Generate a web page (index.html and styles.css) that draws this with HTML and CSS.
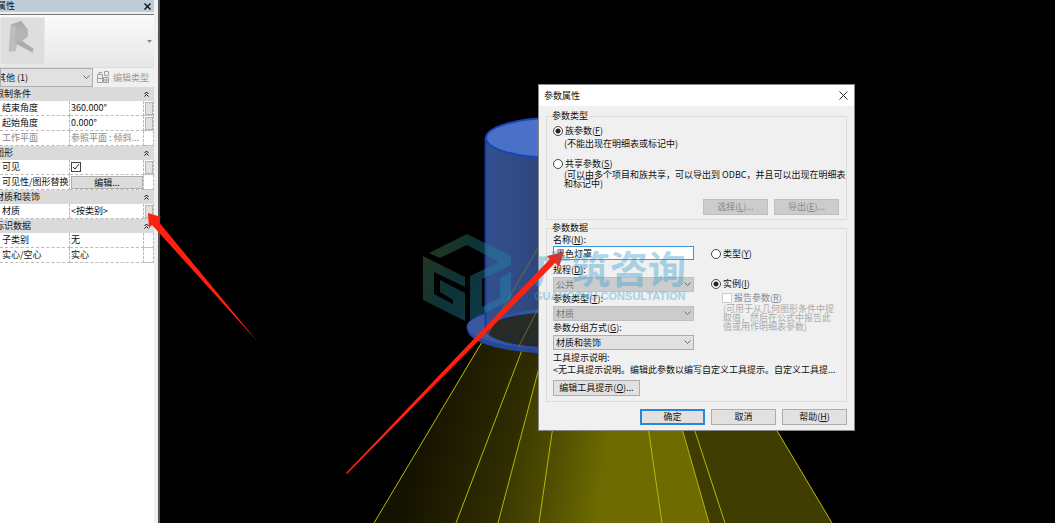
FILE: index.html
```html
<!DOCTYPE html>
<html lang="zh-CN">
<head>
  <meta charset="UTF-8" />
  <meta name="viewport" content="width=device-width, initial-scale=1.0" />
  <title>参数属性</title>
  <link rel="stylesheet" href="styles.css">
</head>
<body>
  <aside class="palette">
    <header class="palette-title">
      <h2>属性</h2>
      <button class="palette-close" aria-label="关闭">
        <svg width="7" height="7" viewBox="0 0 7 7"><path d="M.5 .5l6 6M6.5 .5l-6 6" stroke="#111" stroke-width="1.4"/></svg>
      </button>
    </header>

    <div class="preview">
      <svg class="thumb" width="45" height="48" viewBox="0 0 45 48">
        <path d="M10 7l11-4 7 9v7l-6 5 12 8-1 4-16-8-2 7H8z" fill="#bdbdbd"/>
        <path d="M10 7l11-4 7 9-12-3z" fill="#adadad"/>
        <path d="M16 9l12 3v7l-6 5-8 1z" fill="#b4b4b4"/>
        <path d="M14 25l8-1 12 8-1 4z" fill="#acacac"/>
      </svg>
      <svg class="drop" width="5" height="3" viewBox="0 0 5 3"><path d="M0 0h5L2.500 3z" fill="#888"/></svg>
    </div>

    <div class="type-row">
      <select class="type-select" aria-label="类别"><option>其他 (1)</option></select>
      <button class="edit-type" disabled>
        <svg width="13" height="13" viewBox="0 0 13 13" fill="none" stroke="#a0a0a0">
          <path d="M.5 3.500h5v8h-5zM.5 7.500h5M2 3.500v-2h3M7.500 .5h4v4h-4zM6.500 6.500h5v5h-5zM6.500 9h5M9 6.500v5"/>
        </svg>
        编辑类型
      </button>
    </div>

    <table class="props">
      <tbody>
        <tr class="group"><th colspan="2">限制条件</th><th><svg class="chev" viewBox="0 0 5 6"><path d="M.5 3l2-2 2 2M.5 5.500l2-2 2 2"/></svg></th></tr>
        <tr><td>结束角度</td><td>360.000°</td><td><button class="link" aria-label="关联结束角度"></button></td></tr>
        <tr><td>起始角度</td><td>0.000°</td><td><button class="link" aria-label="关联起始角度"></button></td></tr>
        <tr class="off"><td>工作平面</td><td>参照平面 : 倾斜...</td><td></td></tr>
        <tr class="group"><th colspan="2">图形</th><th><svg class="chev" viewBox="0 0 5 6"><path d="M.5 3l2-2 2 2M.5 5.500l2-2 2 2"/></svg></th></tr>
        <tr><td><label for="visible">可见</label></td><td><input type="checkbox" id="visible" class="tick" checked></td><td><button class="link" aria-label="关联可见"></button></td></tr>
        <tr><td>可见性/图形替换</td><td class="fill"><button class="edit">编辑...</button></td><td></td></tr>
        <tr class="group"><th colspan="2">材质和装饰</th><th><svg class="chev" viewBox="0 0 5 6"><path d="M.5 3l2-2 2 2M.5 5.500l2-2 2 2"/></svg></th></tr>
        <tr><td>材质</td><td>&lt;按类别&gt;</td><td><button class="link" aria-label="关联材质"></button></td></tr>
        <tr class="group"><th colspan="2">标识数据</th><th><svg class="chev" viewBox="0 0 5 6"><path d="M.5 3l2-2 2 2M.5 5.500l2-2 2 2"/></svg></th></tr>
        <tr><td>子类别</td><td>无</td><td></td></tr>
        <tr><td>实心/空心</td><td>实心</td><td></td></tr>
      </tbody>
    </table>
  </aside>

  <main class="stage">
    <svg class="scene" viewBox="160 0 895 523" preserveAspectRatio="xMinYMin slice">
      <defs>
        <linearGradient id="c1" gradientUnits="userSpaceOnUse" x1="420" x2="500" y1="420" y2="440"><stop offset="0" stop-color="#141200"/><stop offset="1" stop-color="#2a2700"/></linearGradient>
        <linearGradient id="c2" gradientUnits="userSpaceOnUse" x1="485" x2="525" y1="430" y2="440"><stop offset="0" stop-color="#272500"/><stop offset="1" stop-color="#333000"/></linearGradient>
        <linearGradient id="c3" gradientUnits="userSpaceOnUse" x1="505" x2="605" y1="460" y2="475"><stop offset="0" stop-color="#3a3700"/><stop offset=".4" stop-color="#4c4a00"/><stop offset="1" stop-color="#6e6c00"/></linearGradient>
        <linearGradient id="tube" x1="0" x2="1"><stop offset="0" stop-color="#33508f"/><stop offset="1" stop-color="#2e467c"/></linearGradient>
      </defs>
      <!-- lamp shade -->
      <path d="M482 340L374 523H456L522 348z" fill="url(#c1)"/>
      <path d="M522 348L456 523H498L548 330z" fill="url(#c2)"/>
      <path d="M548 330L498 523H709L660 350z" fill="url(#c3)"/>
      <path d="M660 350L709 523H832L730 350z" fill="#3e3c00"/>
      <path d="M482 342L374 523M522 350L456 523M549 330L498 523M564 350L539 523M634 330L662 523M654 330L709 523M662 330L725 523M717 330L832 523" stroke="#b9b900" fill="none"/>
      <!-- tube and flange -->
      <ellipse cx="555" cy="330" rx="87" ry="23" fill="#2c4888" stroke="#1a48c0"/>
      <ellipse cx="555" cy="327" rx="88" ry="22" fill="#3a58a0" stroke="#1a48c0"/>
      <ellipse cx="555" cy="330" rx="69" ry="18" fill="#262b27" stroke="#2450b8"/>
      <path d="M485 138V330Q492 315 540 309V138z" fill="url(#tube)"/>
      <path d="M485.500 138V329" stroke="#183b9c" stroke-width="2"/>
      <ellipse cx="555" cy="138" rx="69" ry="20" fill="#4a70c8" stroke="#1a45b4" stroke-width="2"/>
      <path d="M538 248L486 337M538 309L518 348" stroke="#666c45" fill="none"/>
    </svg>

    <section class="dialog" role="dialog" aria-labelledby="dlg-title">
      <header class="dialog-title">
        <h1 id="dlg-title">参数属性</h1>
        <button class="dialog-close" aria-label="关闭">
          <svg width="9" height="9" viewBox="0 0 9 9"><path d="M.5 .5l8 8M8.500 .5l-8 8" stroke="#222"/></svg>
        </button>
      </header>

      <form class="dialog-body">
        <fieldset class="kind">
          <legend>参数类型</legend>
          <label class="choice"><input type="radio" name="kind" checked><span>族参数(<u>F</u>)</span></label>
          <p class="hint">(不能出现在明细表或标记中)</p>
          <label class="choice shared"><input type="radio" name="kind"><span>共享参数(<u>S</u>)</span></label>
          <p class="hint">(可以由多个项目和族共享，可以导出到 ODBC，并且可以出现在明细表<br>和标记中)</p>
          <div class="kind-actions">
            <button type="button" disabled>选择(<u>L</u>)...</button>
            <button type="button" disabled>导出(<u>E</u>)...</button>
          </div>
        </fieldset>

        <fieldset class="data">
          <legend>参数数据</legend>
          <div class="columns">
            <div class="fields">
              <label for="name">名称(<u>N</u>):</label>
              <input type="text" id="name" value="黑色灯罩">
              <label for="discipline" class="gap">规程(<u>D</u>):</label>
              <select id="discipline" disabled><option>公共</option></select>
              <label for="ptype">参数类型(<u>T</u>):</label>
              <select id="ptype" disabled><option>材质</option></select>
              <label for="pgroup">参数分组方式(<u>G</u>):</label>
              <select id="pgroup"><option>材质和装饰</option></select>
            </div>
            <div class="scope">
              <label class="choice"><input type="radio" name="scope"><span>类型(<u>Y</u>)</span></label>
              <label class="choice instance"><input type="radio" name="scope" checked><span>实例(<u>I</u>)</span></label>
              <label class="choice report"><input type="checkbox" disabled><span>报告参数(<u>R</u>)</span></label>
              <p class="note">(可用于从几何图形条件中提<br>取值，然后在公式中报告此<br>值或用作明细表参数)</p>
            </div>
          </div>
          <p class="tip-label">工具提示说明:</p>
          <p class="tip">&lt;无工具提示说明。编辑此参数以编写自定义工具提示。自定义工具提...</p>
          <button type="button" class="edit-tip">编辑工具提示(<u>O</u>)...</button>
        </fieldset>

        <div class="footer">
          <button type="button" class="primary">确定</button>
          <button type="button">取消</button>
          <button type="button">帮助(<u>H</u>)</button>
        </div>
      </form>
    </section>

    <div class="watermark">
      <svg width="90" height="88" viewBox="422 233 90 88">
        <defs>
          <linearGradient id="wm" x1="0" x2="1" y1="0" y2=".6"><stop offset="0" stop-color="#6c8a3c"/><stop offset=".5" stop-color="#1f8088"/><stop offset="1" stop-color="#2290c0"/></linearGradient>
        </defs>
        <path fill="url(#wm)" d="M429 253L467 234L511 256V265L482 279V307L500 298V278L511 272V300L470 320V276L499 262L467 245L440 258ZM423 256L465 277V287L434 272V294L453 304V300L440 292V280L465 293V321L423 300Z"/>
      </svg>
      <div class="brand">
        <strong>广筑咨询</strong>
        <span>GUANGZHU CONSULTATION</span>
      </div>
    </div>
  </main>

  <svg class="arrows" width="1055" height="523" viewBox="0 0 1055 523">
    <defs>
      <linearGradient id="head" gradientUnits="userSpaceOnUse" x1="550" x2="563" y1="265" y2="252"><stop offset="0" stop-color="#ff2010"/><stop offset="1" stop-color="#b8444c"/></linearGradient>
    </defs>
    <path d="M148 213L161 217L158 221L257 341L152 225L149 228Z" fill="#ff2010"/>
    <path d="M564 252L559 267L555 263L347 474L346 473L550 259L547 256Z" fill="url(#head)"/>
  </svg>
</body>
</html>
```

FILE: styles.css
```css
* {
  margin: 0;
  padding: 0;
  box-sizing: border-box;
}
body {
  display: flex;
  min-height: 100vh;
  position: relative;
  overflow: hidden;
  background: #000;
  color: #111;
  font-family: 'Noto Sans CJK SC', sans-serif;
  font-size: 9px;
  line-height: 12px;
}
button, input, select {
  font: inherit;
  color: inherit;
}
h1, h2, th {
  font-size: 9px;
  font-weight: normal;
}

/* Properties palette */
.palette {
  flex: 0 0 160px;
  background: #fff;
  border-right: 2px solid #555;
  box-shadow: inset -4px 0 #f0f0f0;
  padding-right: 4px;
  overflow: hidden;
}
.palette-title {
  display: flex;
  justify-content: space-between;
  align-items: center;
  height: 14px;
  padding-right: 3px;
  background: #bfcddb;
  border-bottom: 2px solid #f0f0f0;
}
.palette-title h2 {
  margin-left: -3px;
}
.palette-close {
  display: flex;
  border: 0;
  background: none;
}
.preview {
  display: flex;
  justify-content: space-between;
  align-items: center;
  height: 54px;
  padding-right: 2px;
  border-top: 1px solid #777;
  border-bottom: 1px solid #ddd;
  background: linear-gradient(#fbfbfb, #e6e6e6);
}
.thumb {
  background: #dedede;
  border: 1px solid #e8e8e8;
}
.type-row {
  display: flex;
  align-items: center;
  gap: 4px;
  height: 19px;
  background: #f0f0f0;
}
select {
  appearance: none;
  border: 1px solid #adadad;
  border-radius: 0;
  background: #e1e1e1 url("data:image/svg+xml,%3Csvg xmlns='http://www.w3.org/2000/svg' width='7' height='5'%3E%3Cpath d='M.5 .5l3 3 3-3' fill='none' stroke='%23666'/%3E%3C/svg%3E") no-repeat right 2px center;
}
.type-select {
  width: 93px;
  height: 19px;
  text-indent: -4px;
}
.edit-type {
  display: flex;
  align-items: center;
  gap: 3px;
  border: 0;
  background: none;
  color: #999;
  white-space: nowrap;
}
.props {
  width: 154px;
  border-collapse: separate;
  border-spacing: 0;
}
.props tr {
  height: 15px;
}
.props .group {
  height: 14px;
  background: #dadada;
}
.props th {
  text-align: left;
  text-indent: -5px;
}
.props th:last-child {
  width: 10px;
  text-indent: 0;
}
.props td {
  padding-left: 1px;
  border-right: 1px dashed #bbb;
  border-bottom: 1px dashed #bbb;
  white-space: nowrap;
}
.props td:first-child {
  width: 70px;
  padding-left: 2px;
}
.props td:last-child {
  padding: 0;
}
.props .fill {
  padding: 0 0 0 1px;
}
.off {
  color: #888;
}
.chev {
  display: block;
  width: 5px;
  height: 6px;
  fill: none;
  stroke: #111;
}
.link {
  display: block;
  width: 8px;
  height: 13px;
  margin-left: 1px;
  border: 1px solid #b5b5b5;
  background: #e1e1e1;
}
.edit {
  display: block;
  width: 100%;
  height: 13px;
  line-height: 11px;
  border: 1px solid #adadad;
  background: #dcdcdc;
}

/* Ticks and radios */
input[type="checkbox"], input[type="radio"] {
  appearance: none;
  flex: none;
  width: 10px;
  height: 10px;
  border: 1px solid #444;
  background: #fff;
}
input[type="radio"] {
  border-radius: 50%;
}
input[type="radio"]:checked {
  background: radial-gradient(#222 0 2px, #fff 3px);
}
input[type="checkbox"]:disabled {
  border-color: #ccc;
}
.tick {
  display: block;
}
.tick:checked {
  background: #fff url("data:image/svg+xml,%3Csvg xmlns='http://www.w3.org/2000/svg' width='8' height='8'%3E%3Cpath d='M1 4l2 2 4-5' fill='none' stroke='%23222'/%3E%3C/svg%3E") no-repeat center;
}

/* Drawing area */
.stage {
  flex: 1;
  position: relative;
  background: #000;
}
.scene {
  position: absolute;
  width: 100%;
  height: 100%;
}

/* Parameter dialog */
.dialog {
  position: absolute;
  left: 378px;
  top: 84px;
  width: 317px;
  background: #f0f0f0;
  border: 1px solid #888;
  white-space: nowrap;
}
.dialog-title {
  display: flex;
  justify-content: space-between;
  align-items: center;
  height: 21px;
  padding: 0 6px 0 5px;
  background: #fff;
}
.dialog-close {
  display: flex;
  border: 0;
  background: none;
}
.dialog-body {
  padding: 4px 7px 5px;
}
fieldset {
  min-width: 0;
  border: 1px solid #dcdcdc;
  padding: 0 6px;
}
legend {
  margin-left: -1px;
  line-height: 12px;
}
.kind {
  height: 110px;
}
.choice {
  display: flex;
  align-items: center;
  gap: 2px;
  height: 13px;
}
.kind .choice {
  margin-top: 2px;
}
.kind .shared {
  margin-top: 7px;
}
.hint {
  padding-left: 11px;
  line-height: 9px;
}
.kind .hint:nth-of-type(1) {
  line-height: 13px;
}
.dialog button:not(.dialog-close) {
  width: 65px;
  height: 16px;
  line-height: 12px;
  border: 1px solid #adadad;
  background: #e1e1e1;
}
.dialog button:not(.dialog-close):disabled {
  background: #ccc;
  border-color: #bfbfbf;
  color: #888;
}
.kind-actions {
  display: flex;
  justify-content: flex-end;
  gap: 6px;
  margin-top: 11px;
  padding-right: 1px;
}
.data {
  margin-top: 2px;
}
.columns {
  display: flex;
  gap: 17px;
}
.fields {
  display: flex;
  flex-direction: column;
  width: 141px;
}
.fields label {
  height: 14px;
  line-height: 14px;
}
.fields label:first-child {
  height: 12px;
  line-height: 12px;
}
.fields .gap {
  margin-top: 3px;
}
.fields input {
  height: 14px;
  padding-left: 2px;
  border: 1px solid #3c96dc;
  background: #fff;
  outline: none;
}
.fields select {
  height: 15px;
  padding-left: 2px;
}
select:disabled {
  background-color: #ccc;
  border-color: #bfbfbf;
  color: #777;
  opacity: 1;
}
.scope {
  flex: 1;
  padding-top: 13px;
}
.instance {
  margin-top: 17px;
}
.report {
  padding-left: 11px;
  margin-top: 1px;
  color: #888;
}
.note {
  padding-left: 12px;
  line-height: 9px;
  color: #aaa;
}
.tip-label {
  margin-top: 2px;
}
.edit-tip {
  margin: 4px 0 5px;
}
.dialog .edit-tip:not(.primary) {
  width: 87px;
}
.footer {
  display: flex;
  justify-content: flex-end;
  gap: 6px;
  margin-top: 7px;
}
.dialog .primary:not(.edit-tip) {
  border: 2px solid #2a86d8;
}

/* Overlays */
.watermark {
  position: absolute;
  left: 262px;
  top: 233px;
  display: flex;
  gap: 22px;
  opacity: 0.4;
  color: #3aa0d4;
  pointer-events: none;
  white-space: nowrap;
}
.brand {
  padding-top: 14px;
}
.brand strong {
  display: block;
  font-size: 38px;
  line-height: 40px;
}
.brand span {
  display: block;
  margin-top: 3px;
  font-family: 'Liberation Sans', sans-serif;
  font-size: 11px;
  font-weight: bold;
}
.arrows {
  position: absolute;
  left: 0;
  top: 0;
  pointer-events: none;
}
```
